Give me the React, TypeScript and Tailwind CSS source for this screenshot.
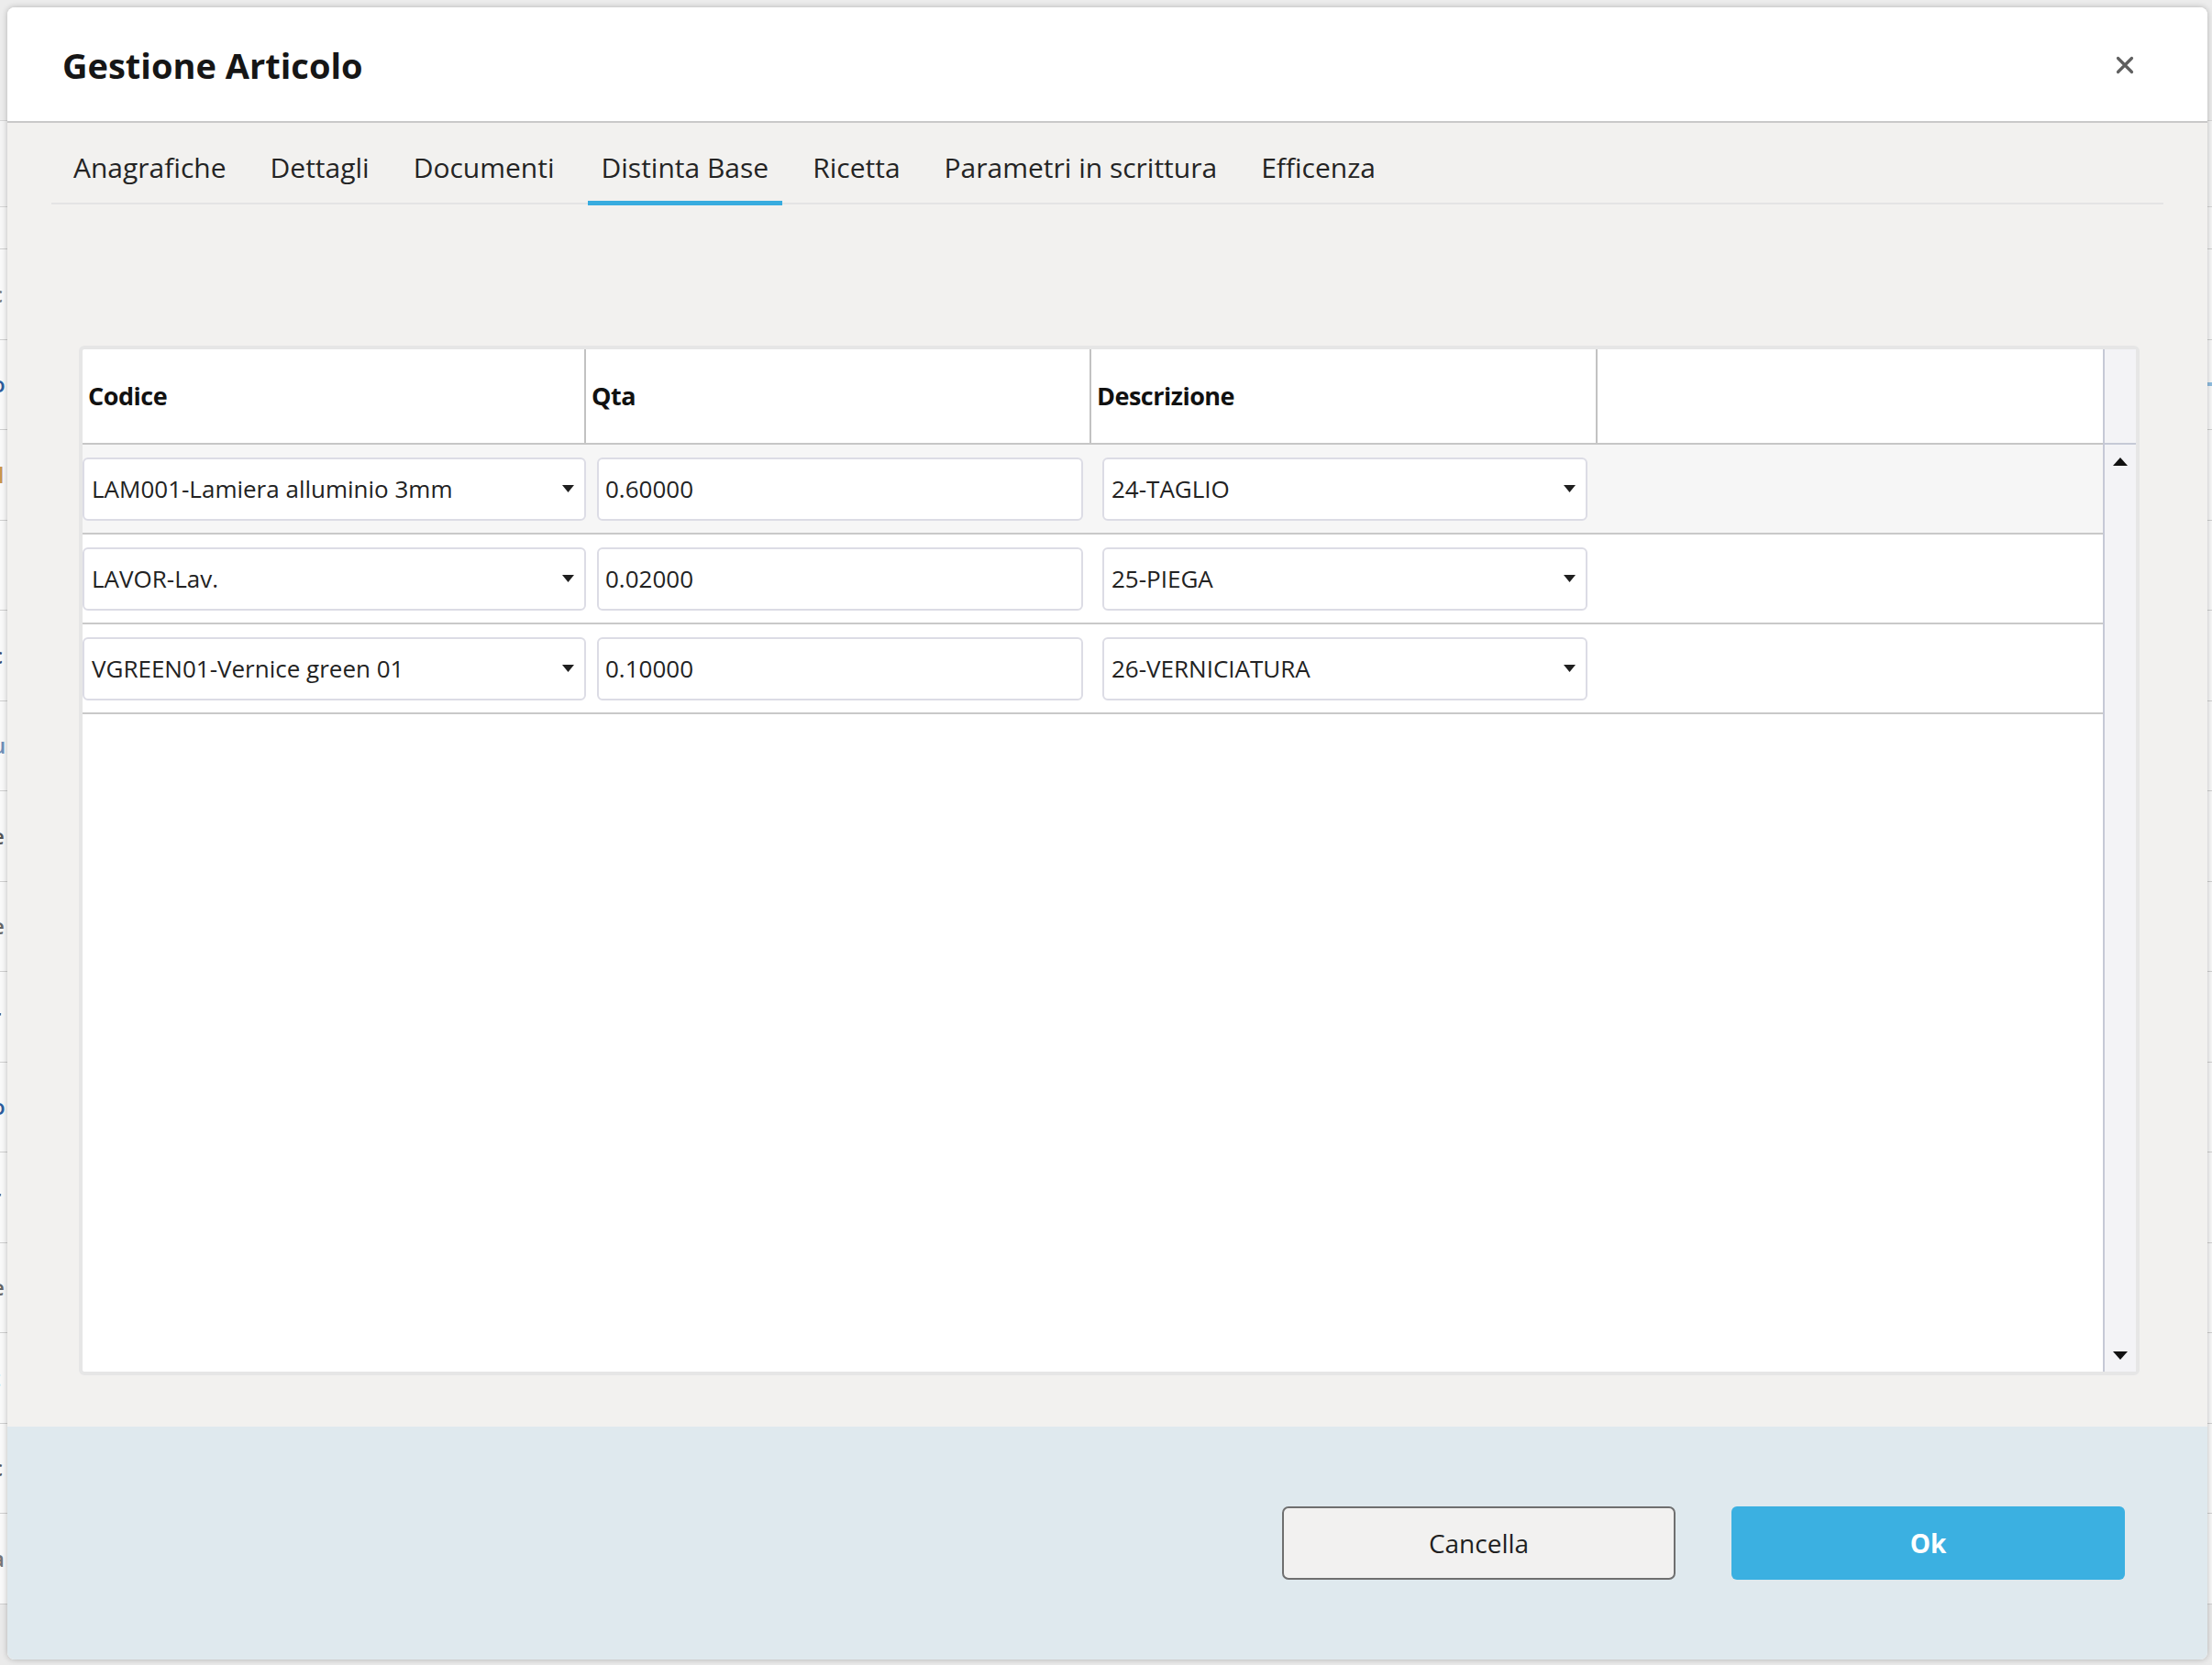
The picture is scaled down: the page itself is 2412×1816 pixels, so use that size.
const tabs = [
  'Anagrafiche',
  'Dettagli',
  'Documenti',
  'Distinta Base',
  'Ricetta',
  'Parametri in scrittura',
  'Efficenza',
];

const rows = [
  { codice: 'LAM001-Lamiera alluminio 3mm', qta: '0.60000', descrizione: '24-TAGLIO' },
  { codice: 'LAVOR-Lav.', qta: '0.02000', descrizione: '25-PIEGA' },
  { codice: 'VGREEN01-Vernice green 01', qta: '0.10000', descrizione: '26-VERNICIATURA' },
];

// righe della pagina che resta dietro al dialog
const backRows = [
  { ch: 'c', color: 'text-[#777]' },
  { ch: 'o', color: 'text-[#2c5c9c]' },
  { ch: 'il', color: 'text-[#c8964c]' },
  { ch: 'i', color: 'text-[#3f7fc0]' },
  { ch: 'c', color: 'text-[#33456a]' },
  { ch: 'u', color: 'text-[#6f8fb8]' },
  { ch: 'e', color: 'text-[#555]' },
  { ch: 'e', color: 'text-[#666]' },
  { ch: 'r', color: 'text-[#444]' },
  { ch: 'o', color: 'text-[#2c5c9c]' },
  { ch: 'r', color: 'text-[#555]' },
  { ch: 'e', color: 'text-[#666]' },
  { ch: 't', color: 'text-[#2c5c9c]' },
  { ch: 'c', color: 'text-[#555]' },
  { ch: 'a', color: 'text-[#777]' },
];

const Caret = () => (
  <svg width="13" height="8" viewBox="0 0 13 8" className="shrink-0">
    <path d="M0 0 L13 0 L6.5 8 Z" fill="#1f1f1f" />
  </svg>
);

const SelectBox = ({ value }: { value: string }) => (
  <div className="flex h-[69px] w-full items-center justify-between rounded-[6px] border-2 border-[#dcdce5] bg-white pl-[8px] pr-[11px]">
    <span className="text-[26px] text-[#222]">{value}</span>
    <Caret />
  </div>
);

const InputBox = ({ value }: { value: string }) => (
  <div className="flex h-[69px] w-full items-center rounded-[6px] border-2 border-[#dcdce5] bg-white pl-[7px]">
    <span className="text-[26px] text-[#222]">{value}</span>
  </div>
);

const App = () => {
  return (
    <div className="relative h-[1816px] w-full overflow-hidden bg-[#eaeaea] font-['Open_Sans',sans-serif]">
      {/* pagina sottostante */}
      <div className="absolute inset-0 flex flex-col">
        <div className="h-[132px] border-b border-[#d6d6d6] bg-[#ececec]" />
        <div className="h-[94px] border-b border-[#d6d6d6] bg-[#f4f4f4]" />
        <div className="h-[46px] border-b border-[#d0d0d0] bg-[#f7f7f7]" />
        {backRows.map((r, i) => (
          <div
            key={i}
            className="flex h-[98.5px] items-center justify-between border-b border-[#d0d0d0] bg-[#f9f9f9]"
          >
            <span className={`-ml-[9px] text-[24px] font-semibold ${r.color}`}>{r.ch}</span>
            {i === 1 && <span className="h-[4px] w-[8px] bg-[#8fbde0]" />}
          </div>
        ))}
      </div>

      {/* dialog */}
      <div className="absolute left-[8px] top-[8px] flex h-[1802px] w-[2399px] flex-col overflow-hidden rounded-[8px] bg-white shadow-[0_0_6px_rgba(0,0,0,0.25)]">
        <div className="flex h-[126px] shrink-0 items-center justify-between border-b-2 border-[#c9c9c9] bg-white pb-[2px] pl-[60px] pr-[79px] pt-[4px]">
          <h1 className="text-[38px] font-bold text-[#161616]">Gestione Articolo</h1>
          <svg width="22" height="22" viewBox="0 0 22 22">
            <path d="M3.5 3.5 L18.5 18.5 M18.5 3.5 L3.5 18.5" stroke="#5f5f5f" strokeWidth="3.2" strokeLinecap="round" />
          </svg>
        </div>

        <div className="flex flex-1 flex-col bg-[#f2f1ef]">
          <div className="mx-[48px] mt-[12px] flex gap-[18px] border-b-2 border-[#e4e4e4] pl-[9px]">
            {tabs.map((tab) => (
              <div
                key={tab}
                className={`-mb-[3px] flex h-[78px] items-center border-b-[5px] px-[15px] text-[30px] text-[#242424] ${
                  tab === 'Distinta Base' ? 'border-[#38acdf]' : 'border-transparent'
                } ${tab === 'Distinta Base' ? 'ml-[3px]' : ''}`}
              >
                {tab}
              </div>
            ))}
          </div>

          <div className="ml-[78px] mr-[74px] mt-[154px] flex h-[1123px] rounded-[6px] border-4 border-[#e6e6e6] bg-white">
            <div className="flex flex-1 flex-col">
              <div className="grid h-[104px] grid-cols-[549px_551px_552px_551px] border-b-2 border-[#c6c6c6]">
                {['Codice', 'Qta', 'Descrizione', ''].map((h, i) => (
                  <div
                    key={i}
                    className={`flex items-center pl-[6px] text-[27px] font-bold tracking-[-0.5px] text-[#111] ${
                      i < 3 ? 'border-r-2 border-[#c2c2c2]' : ''
                    }`}
                  >
                    {h}
                  </div>
                ))}
              </div>
              {rows.map((row, i) => (
                <div
                  key={row.codice}
                  className={`grid h-[98px] grid-cols-[549px_551px_552px_551px] items-center border-b-2 border-[#c9c9c9] ${
                    i === 0 ? 'bg-[#f6f6f6]' : 'bg-white'
                  }`}
                >
                  <div>
                    <SelectBox value={row.codice} />
                  </div>
                  <div className="pl-[12px] pr-[9px]">
                    <InputBox value={row.qta} />
                  </div>
                  <div className="pl-[12px] pr-[11px]">
                    <SelectBox value={row.descrizione} />
                  </div>
                  <div />
                </div>
              ))}
            </div>

            <div className="flex w-[36px] flex-col border-l-2 border-[#c6c9d6] bg-[#f3f3f6]">
              <div className="h-[104px] border-b-2 border-[#c6c9d6]" />
              <div className="flex flex-1 flex-col items-center justify-between pb-[13px] pt-[14px]">
                <svg width="16" height="9" viewBox="0 0 16 9">
                  <path d="M8 0 L16 9 L0 9 Z" fill="#111" />
                </svg>
                <svg width="16" height="9" viewBox="0 0 16 9">
                  <path d="M0 0 L16 0 L8 9 Z" fill="#111" />
                </svg>
              </div>
            </div>
          </div>

          <div className="flex-1" />

          <div className="flex h-[254px] shrink-0 items-center justify-end gap-[61px] bg-[#dfe9ee] pr-[90px]">
            <button className="flex h-[80px] w-[429px] items-center justify-center rounded-[7px] border-2 border-[#6f6f6f] bg-[#f2f1f0] text-[28px] text-[#1f1f1f]">
              Cancella
            </button>
            <button className="flex h-[80px] w-[429px] items-center justify-center rounded-[6px] bg-[#3bb0e1] text-[28px] font-bold text-white">
              Ok
            </button>
          </div>
        </div>
      </div>
    </div>
  );
};

export default App;
